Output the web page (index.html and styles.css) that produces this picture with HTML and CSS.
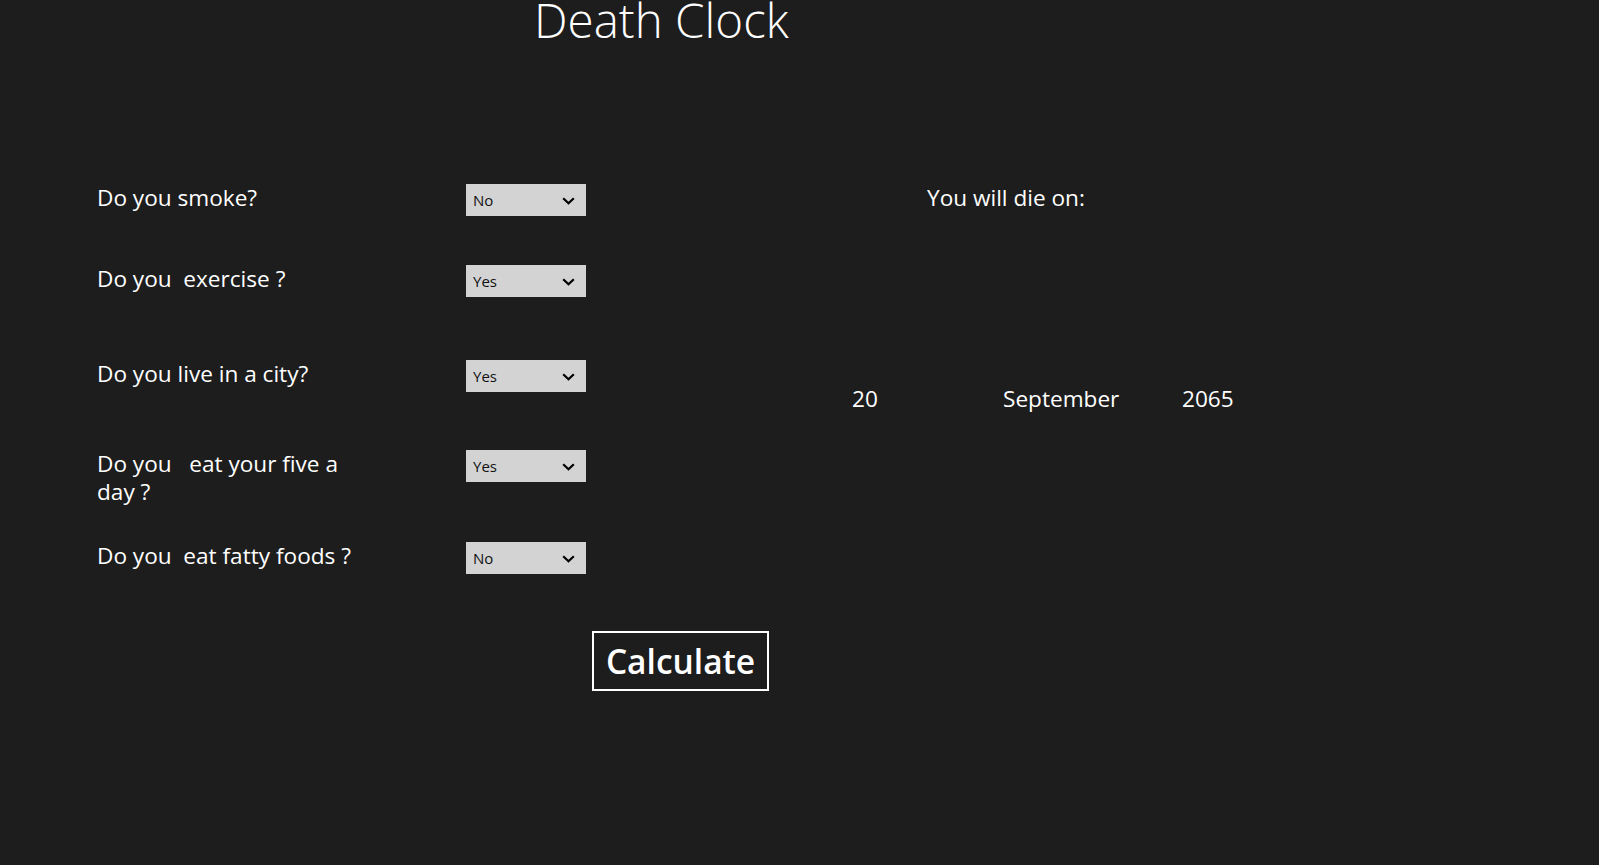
FILE: index.html
```html
<!DOCTYPE html>
<html lang="en">
<head>
<meta charset="utf-8">
<title>Death Clock</title>
<link rel="stylesheet" href="styles.css">
</head>
<body>
<header class="title-bar">
  <h1 class="title">Death Clock</h1>
</header>
<main class="content">
  <section class="quiz">
    <div class="questions">
      <label class="question" for="smoke">Do you smoke?</label>
      <div class="choice-wrap">
        <select id="smoke" class="choice"><option>No</option><option>Yes</option></select>
        <svg class="chevron" viewBox="0 0 13 8" aria-hidden="true"><path d="M1.2 1.2 L6.5 6.3 L11.8 1.2" fill="none" stroke="#000" stroke-width="2.2"/></svg>
      </div>

      <label class="question" for="exercise">Do you  exercise ?</label>
      <div class="choice-wrap">
        <select id="exercise" class="choice"><option>Yes</option><option>No</option></select>
        <svg class="chevron" viewBox="0 0 13 8" aria-hidden="true"><path d="M1.2 1.2 L6.5 6.3 L11.8 1.2" fill="none" stroke="#000" stroke-width="2.2"/></svg>
      </div>

      <label class="question" for="city">Do you live in a city?</label>
      <div class="choice-wrap">
        <select id="city" class="choice"><option>Yes</option><option>No</option></select>
        <svg class="chevron" viewBox="0 0 13 8" aria-hidden="true"><path d="M1.2 1.2 L6.5 6.3 L11.8 1.2" fill="none" stroke="#000" stroke-width="2.2"/></svg>
      </div>

      <label class="question" for="five">Do you   eat your five a day ?</label>
      <div class="choice-wrap">
        <select id="five" class="choice"><option>Yes</option><option>No</option></select>
        <svg class="chevron" viewBox="0 0 13 8" aria-hidden="true"><path d="M1.2 1.2 L6.5 6.3 L11.8 1.2" fill="none" stroke="#000" stroke-width="2.2"/></svg>
      </div>

      <label class="question" for="fatty">Do you  eat fatty foods ?</label>
      <div class="choice-wrap">
        <select id="fatty" class="choice"><option>No</option><option>Yes</option></select>
        <svg class="chevron" viewBox="0 0 13 8" aria-hidden="true"><path d="M1.2 1.2 L6.5 6.3 L11.8 1.2" fill="none" stroke="#000" stroke-width="2.2"/></svg>
      </div>
    </div>
    <button class="calc" type="button">Calculate</button>
  </section>
  <section class="result">
    <p class="result-heading">You will die on:</p>
    <div class="date">
      <span class="day">20</span>
      <span class="month">September</span>
      <span class="year">2065</span>
    </div>
  </section>
</main>
</body>
</html>
```

FILE: styles.css
```css
html, body {
  margin: 0;
  padding: 0;
  background: #1d1d1d;
  color: #ffffff;
  font-family: "Open Sans", "Noto Sans", "Liberation Sans", sans-serif;
}

body {
  width: 1599px;
  height: 865px;
  overflow: hidden;
}

.title-bar {
  padding-left: 534px;
  height: 48px;
}

.title {
  margin: 0;
  font-size: 47.5px;
  font-weight: 300;
  line-height: 40px;
  letter-spacing: 0;
}

.content {
  display: flex;
  padding-top: 136px;
}

.quiz {
  display: flex;
  flex-direction: column;
  padding-left: 97px;
  width: 680px;
}

.questions {
  display: grid;
  grid-template-columns: 369px 120px;
  grid-template-rows: 81px 95px 90px 92px 32px;
  align-items: baseline;
}

.question {
  font-size: 22.6px;
  line-height: 28px;
  white-space: pre-wrap;
  max-width: 272px;
}

.choice-wrap {
  position: relative;
  width: 120px;
  height: 32px;
}

.choice {
  -webkit-appearance: none;
  appearance: none;
  display: block;
  width: 120px;
  height: 32px;
  margin: 0;
  border: none;
  border-radius: 0;
  padding: 0 0 0 7px;
  background: #d3d3d3;
  color: #111111;
  font-family: "Open Sans", "Noto Sans", "Liberation Sans", sans-serif;
  font-size: 15px;
  line-height: 32px;
  outline: none;
}

.chevron {
  position: absolute;
  left: 96px;
  top: 13px;
  width: 13px;
  height: 8px;
  pointer-events: none;
}

.calc {
  align-self: flex-start;
  margin: 57px 0 0 495px;
  width: 177px;
  height: 60px;
  padding: 0;
  border: 2px solid #ffffff;
  background: transparent;
  color: #ffffff;
  font-family: "Open Sans", "Noto Sans", "Liberation Sans", sans-serif;
  font-size: 33.5px;
  font-weight: 600;
  line-height: 54px;
}

.result {
  padding-left: 75px;
}

.result-heading {
  margin: 0 0 0 75px;
  font-size: 22.6px;
  line-height: 28px;
}

.date {
  display: flex;
  margin-top: 173px;
  font-size: 22.6px;
  line-height: 28px;
}

.day {
  width: 151px;
}

.month {
  width: 179px;
}
```
